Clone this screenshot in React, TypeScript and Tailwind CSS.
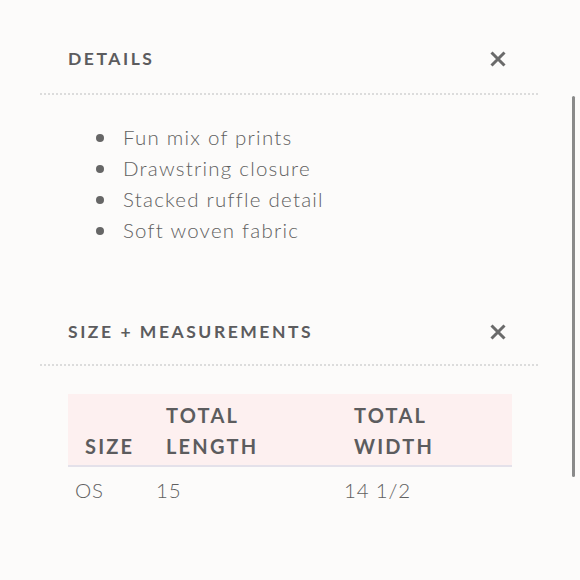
import React from 'react';

const details = ['Fun mix of prints', 'Drawstring closure', 'Stacked ruffle detail', 'Soft woven fabric'];

const CloseIcon = () => (
  <svg width="18" height="18" viewBox="0 0 18 18" className="text-[#6a6a6a]">
    <path d="M2.5 2.5 L15.5 15.5 M15.5 2.5 L2.5 15.5" stroke="currentColor" strokeWidth="3" strokeLinecap="butt" />
  </svg>
);

const SectionHeader = ({ title, className = 'mb-[22px]' }: { title: string; className?: string }) => (
  <div className={`flex items-center justify-between pl-[28px] pr-[31px] h-[24px] ${className}`}>
    <h2 className="text-[17.5px] font-bold tracking-[0.145em] text-[#5c5c5e] uppercase leading-none">{title}</h2>
    <button className="flex items-center justify-center">
      <CloseIcon />
    </button>
  </div>
);

export default function App() {
  return (
    <div
      className="relative w-[580px] h-[580px] bg-[#fcfbfa] overflow-hidden"
      style={{ fontFamily: 'Lato, "Open Sans", sans-serif' }}
    >
      <div className="w-[498px] ml-[40px] pt-[47px]">
        {/* Details */}
        <SectionHeader title="Details" />
        <div className="border-t-2 border-dotted border-[#dcdcdc]" />
        <ul className="mt-[27px] pl-[56px] flex flex-col">
          {details.map((d) => (
            <li key={d} className="flex items-center h-[31px]">
              <span className="w-[8px] h-[8px] rounded-full bg-[#666666]" />
              <span className="ml-[19px] text-[20.5px] font-light tracking-[0.06em] text-[#606060]">{d}</span>
            </li>
          ))}
        </ul>

        {/* Size + measurements */}
        <div className="mt-[74px]">
          <SectionHeader title="Size + Measurements" className="mb-[20px]" />
          <div className="border-t-2 border-dotted border-[#dcdcdc]" />
        </div>

        <div className="mt-[28px] ml-[28px] w-[444px]">
          <div className="grid grid-cols-[81px_188px_175px] bg-[#fdf0f0] border-b-2 border-[#e4e1ea] h-[73px] items-end pb-[3px]">
            {[['', 'SIZE'], ['TOTAL', 'LENGTH'], ['TOTAL', 'WIDTH']].map(([a, b], i) => (
              <div
                key={i}
                className="flex flex-col pl-[17px] text-[20px] font-bold tracking-[0.11em] text-[#5c5c5e] leading-[31px]"
              >
                {a && <span>{a}</span>}
                <span>{b}</span>
              </div>
            ))}
          </div>
          <div className="grid grid-cols-[81px_188px_175px] h-[46px] items-center text-[20.5px] font-light tracking-[0.04em] text-[#606060]">
            <div className="pl-[7px]">OS</div>
            <div className="pl-[7px]">15</div>
            <div className="pl-[7px]">14 1/2</div>
          </div>
        </div>
      </div>

      {/* scrollbar thumb */}
      <div className="absolute left-[572px] top-[96px] w-[3px] h-[381px] rounded-full bg-[#8a8a8a]" />
    </div>
  );
}
